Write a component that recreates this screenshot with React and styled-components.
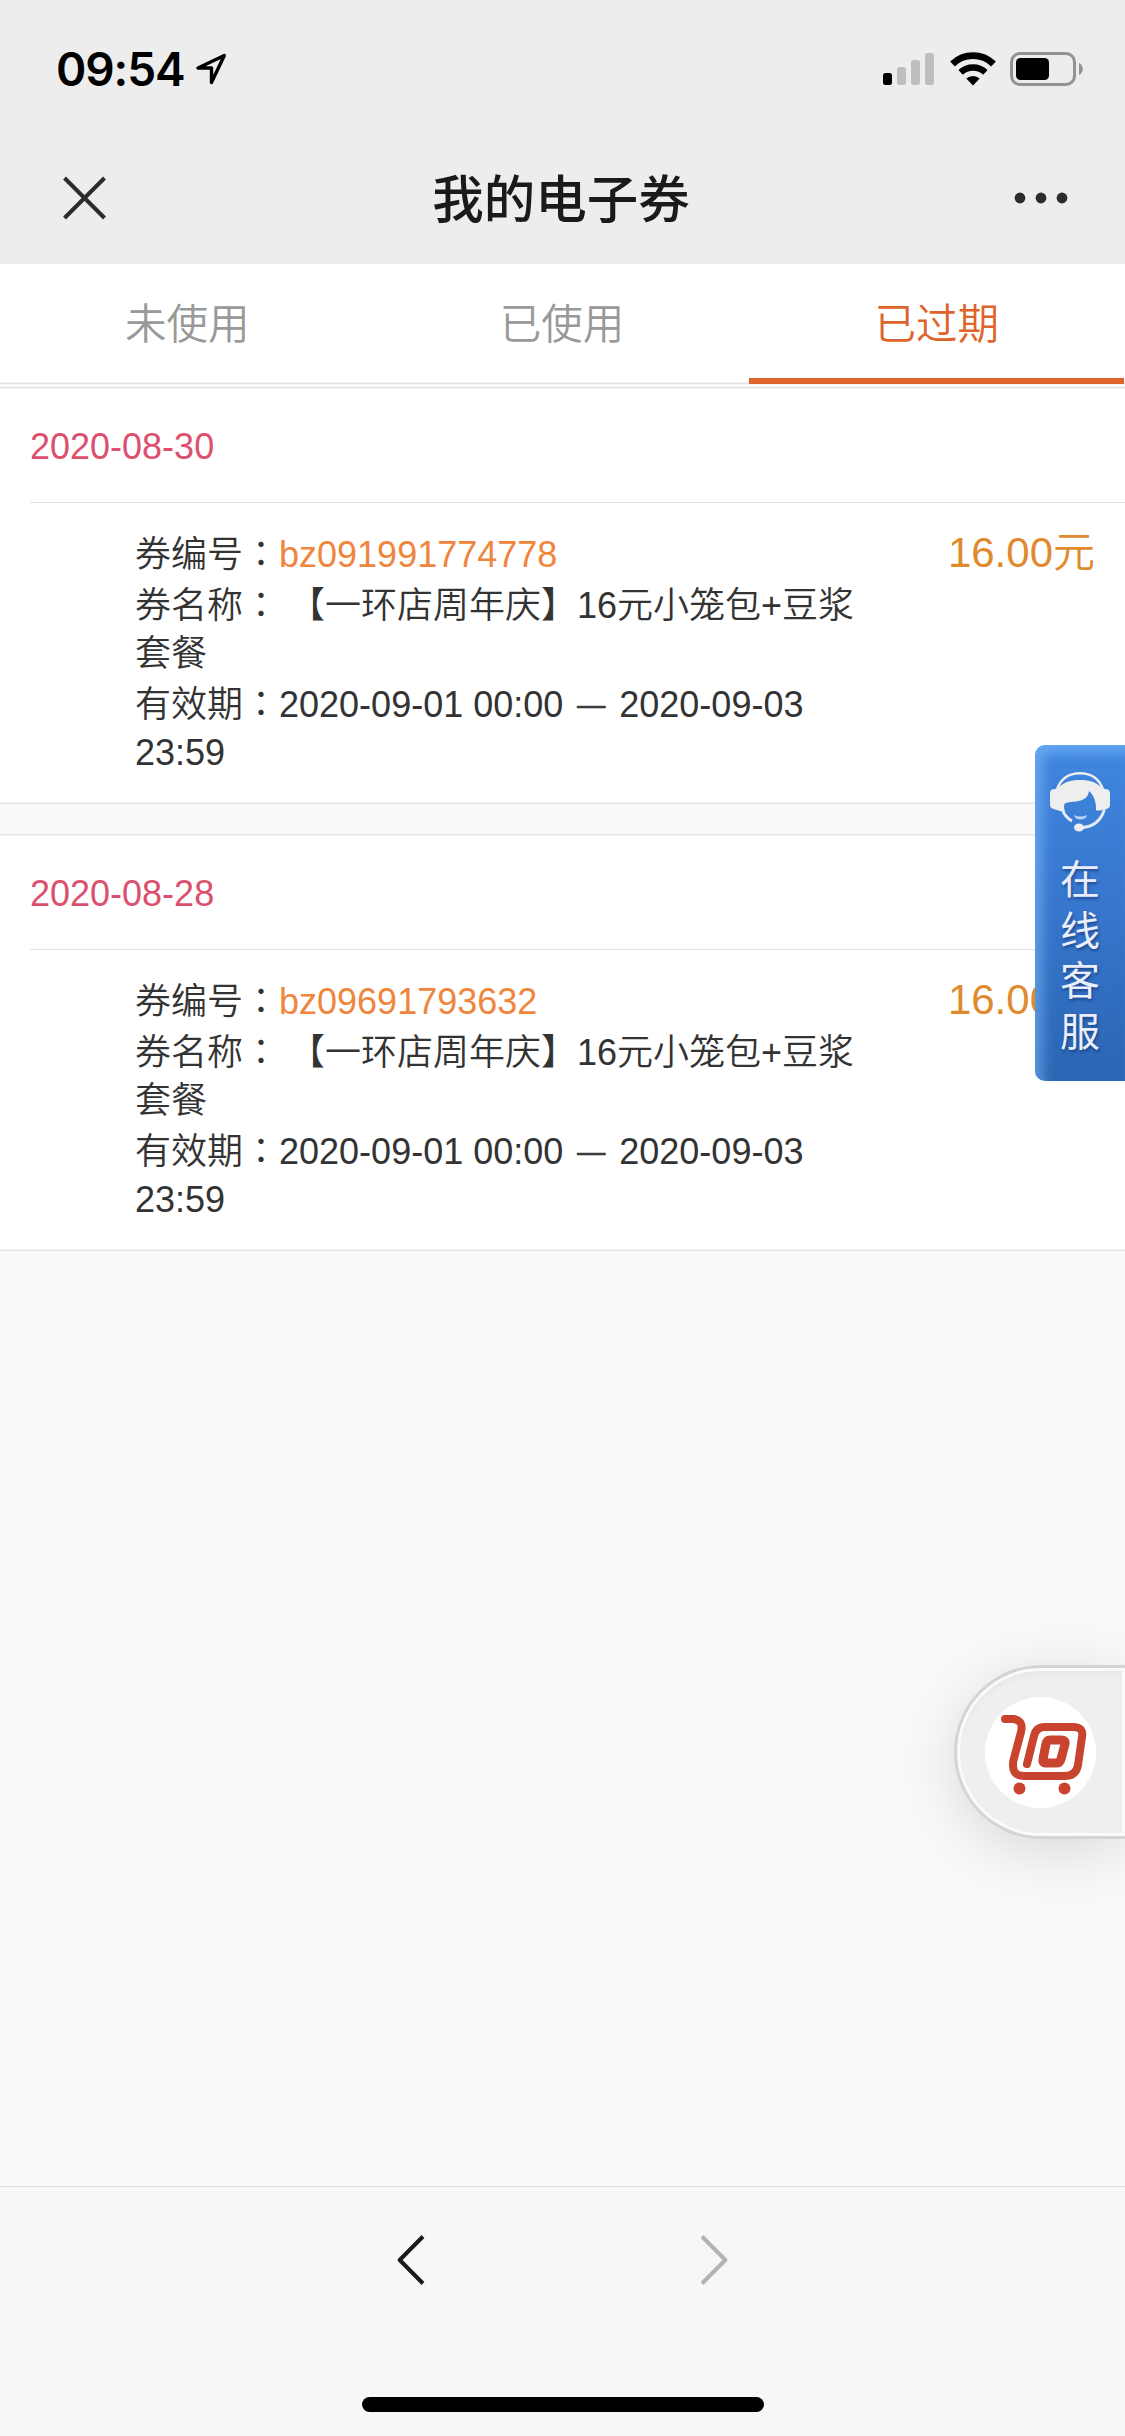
import React from "react";
import styled, { createGlobalStyle } from "styled-components";

const GlobalStyle = createGlobalStyle`
  * { box-sizing: border-box; }
  body {
    margin: 0;
    background: #f9f9f9;
    font-family: "Liberation Sans", "Noto Sans CJK SC", sans-serif;
    color: #333;
  }
  svg { display: block; }
`;

const Screen = styled.div`
  position: relative;
  display: flex;
  flex-direction: column;
  width: 1125px;
  height: 2436px;
  overflow: hidden;
  background: #f9f9f9;
`;

const Header = styled.header`
  height: 264px;
  flex: none;
  background: #ededed;
`;

const StatusBar = styled.div`
  display: flex;
  align-items: center;
  justify-content: space-between;
  height: 132px;
  padding: 6px 42px 0 56px;
`;

const Clock = styled.div`
  display: flex;
  align-items: center;
  gap: 10px;
  font: 600 46px/60px Inter, sans-serif;
  letter-spacing: -1.1px;
  color: #000;
`;

const StatusIcons = styled.div`
  display: flex;
  align-items: center;
  gap: 14.5px;
`;

const NavBar = styled.div`
  display: grid;
  grid-template-columns: 200px 1fr 200px;
  align-items: center;
  height: 132px;
`;

const NavSlot = styled.div`
  display: flex;
  justify-content: ${(p) => p.$side};
  padding: ${(p) => (p.$side === "flex-start" ? "0 0 0 61px" : "0 57px 0 0")};
`;

const Title = styled.h1`
  margin: 0;
  padding-right: 3px;
  text-align: center;
  font-family: "Noto Sans CJK SC", sans-serif;
  font-size: 51.5px;
  line-height: 128px;
  height: 132px;
  font-weight: 500;
  color: #1a1a1a;
`;

const Tabs = styled.nav`
  display: flex;
  flex: none;
  width: 100%;
  height: 120px;
  padding-right: 1px;
  background: #fff;
  box-shadow: inset 0 -1px #e3e3e3, inset 0 -2px #f0f0f0;
`;

const Tab = styled.div`
  flex: 1;
  height: 120px;
  text-align: center;
  font-size: 41.5px;
  font-weight: 350;
  line-height: 122px;
  color: ${(p) => (p.$active ? "#de642b" : "#999")};
  border-bottom: 6px solid ${(p) => (p.$active ? "#de642b" : "transparent")};
`;

const List = styled.main`
  display: flex;
  flex-direction: column;
  gap: 30px;
  flex: 1;
  padding-top: 3px;
`;

const Card = styled.section`
  height: 417px;
  background: #fff;
  border-top: 1px solid #e3e3e3;
  border-bottom: 1px solid #e3e3e3;
  box-shadow: inset 0 1px #f2f2f2, inset 0 -1px #f2f2f2;
`;

const CardDate = styled.div`
  height: 115px;
  margin-left: 30px;
  font-size: 36px;
  line-height: 118px;
  color: #dd4f6e;
  border-bottom: 1px solid #e3e3e3;
`;

const CardBody = styled.div`
  display: flex;
  justify-content: space-between;
  padding: 25px 30px 0 135px;
`;

const Details = styled.div`
  width: 735px;
  font-size: 36px;
  font-weight: 350;
`;

const Row = styled.div`
  padding-top: 3px;
  line-height: 48px;
`;

const Colon = styled.span`
  font-family: "Noto Sans CJK TC", sans-serif;
  line-height: 0;
`;

const Code = styled.span`
  color: #ef863e;
`;

const Dash = styled.span`
  padding: 0 4px;
  font-size: 28px;
  line-height: 0;
  vertical-align: 3px;
  -webkit-text-stroke: 0.7px #333;
`;

const Price = styled.div`
  font-size: 42px;
  font-weight: 350;
  line-height: 50px;
  white-space: nowrap;
  color: #e08a30;
`;

const ServiceTab = styled.aside`
  position: absolute;
  right: 0;
  top: 745px;
  display: flex;
  flex-direction: column;
  align-items: center;
  width: 90px;
  height: 336px;
  padding-top: 26px;
  border-radius: 10px 0 0 10px;
  background: linear-gradient(#3f87df, #3877ce 45%, #2a66b3);
  box-shadow: inset 8px 8px 12px rgba(135, 195, 255, 0.5);
`;

const ServiceText = styled.div`
  width: 40px;
  margin-top: 22px;
  font-size: 40px;
  line-height: 50.6px;
  color: #e9eefa;
  text-shadow: 1px 2px 3px rgba(10, 40, 100, 0.6);
`;

const CartDock = styled.aside`
  position: absolute;
  right: 0;
  top: 1665px;
  width: 171px;
  height: 174px;
  padding: 3px;
  border: 3px solid #d4d4d4;
  border-right: 0;
  border-radius: 87px 0 0 87px;
  background: #fafafa;
  box-shadow: 0 12px 60px rgba(0, 0, 0, 0.13);
`;

const CartInner = styled.div`
  display: flex;
  align-items: center;
  height: 162px;
  padding-left: 25px;
  border-radius: 81px 0 0 81px;
  background: #efefef;
  box-shadow: inset 0 6px 8px -4px rgba(0, 0, 0, 0.05);
`;

const CartCircle = styled.div`
  width: 111px;
  height: 111px;
  border-radius: 50%;
  background: #fff;
`;

const Toolbar = styled.footer`
  display: flex;
  flex: none;
  flex-direction: column;
  align-items: center;
  height: 250px;
  padding-top: 47px;
  background: #f7f7f7;
  border-top: 1px solid #dcdcdc;
`;

const PageButtons = styled.div`
  display: flex;
  gap: 275px;
`;

const HomeIndicator = styled.div`
  width: 402px;
  height: 15px;
  margin: 111px 0 0 1px;
  border-radius: 8px;
  background: #000;
`;

const LocationIcon = () => (
  <svg width="32" height="32" viewBox="0 0 32 32">
    <path d="M29.300 2.500 3 15H16.500V29.500Z" fill="none" stroke="#000" strokeWidth="3.4" strokeLinejoin="round" />
  </svg>
);

const SignalIcon = () => (
  <svg width="52" height="34" viewBox="0 0 52 34">
    <rect x="0" y="21" width="9" height="12" rx="2.5" fill="#000" />
    <rect x="14" y="15" width="9" height="18" rx="2.5" fill="#bebebe" />
    <rect x="28" y="8" width="9" height="25" rx="2.5" fill="#bebebe" />
    <rect x="42" y="1" width="9" height="32" rx="2.5" fill="#bebebe" />
  </svg>
);

const WifiIcon = () => (
  <svg width="46" height="34" viewBox="0 0 46 34">
    <path d="M2.5 12a29.500 29.500 0 0 1 41 0" fill="none" stroke="#000" strokeWidth="6.8" />
    <path d="M10.6 20.4a18 18 0 0 1 24.800 0" fill="none" stroke="#000" strokeWidth="6.4" />
    <path d="M16.300 26.600a9.600 9.600 0 0 1 13.400 0L23 33.400Z" fill="#000" />
  </svg>
);

const BatteryIcon = () => (
  <svg width="73" height="34" viewBox="0 0 73 34">
    <rect x="1.5" y="1.5" width="63" height="31" rx="8.5" fill="none" stroke="#929292" strokeWidth="3" />
    <rect x="6" y="6" width="33" height="22" rx="4.5" fill="#000" />
    <path d="M69 11c5 2 5 10 0 12Z" fill="#929292" />
  </svg>
);

const CloseIcon = () => (
  <svg width="46" height="46" viewBox="0 0 46 46">
    <path d="M3.5 3 43.5 43M43.5 3 3.5 43" stroke="#2c2c2c" strokeWidth="4" />
  </svg>
);

const MoreIcon = () => (
  <svg width="54" height="12" viewBox="0 0 54 12">
    {[6, 27, 48].map((x) => (
      <circle key={x} cx={x} cy="6" r="5.4" fill="#2c2c2c" />
    ))}
  </svg>
);

const Chevron = ({ forward }) => (
  <svg width="28" height="52" viewBox="0 0 28 52">
    <path
      d={forward ? "M2 2.5 25.3 26 2 49.5" : "M26 2.5 2.7 26 26 49.5"}
      fill="none"
      stroke={forward ? "#b2b2b2" : "#1a1a1a"}
      strokeWidth="4"
      strokeLinejoin="round"
    />
  </svg>
);

const HeadsetIcon = () => (
  <svg width="60" height="62" viewBox="0 0 60 62">
    <path d="M6.500 20C10 8 19 2.200 30 2.200S50 8 53.500 20" fill="none" stroke="#eee" strokeWidth="2.6" />
    <path d="M2 18.500 8 17.500C13 11 21 9 30 9S47 11 52 17.500L58 18.500Q60 19 60 22V34Q60 37 58 37.500L50 39.500H46C46.500 32 44 24 39 20 38 27 33 29.500 26 30.500 19 31.500 14 31 14 35Q14 38 15 40H10L2 37.500Q0 37 0 34V22Q0 19 2 18.500Z" fill="#eee" />
    <path d="M12.500 39c2 5.500 5 8.500 9.500 11" fill="none" stroke="#e4ecf7" strokeWidth="3" />
    <path d="M24 44q6 3 13 0-1 4.500-6.500 4.500T24 44Z" fill="#b9d2f3" />
    <path d="M54.500 38C51 50 43 56.500 30 56.500" fill="none" stroke="#e4ecf7" strokeWidth="2.8" />
    <ellipse cx="29" cy="56.500" rx="5" ry="4" fill="#eee" />
  </svg>
);

const CartIcon = () => (
  <svg width="111" height="111" viewBox="0 0 111 111" fill="none" stroke="#c9442f" strokeWidth="8" strokeLinecap="round" strokeLinejoin="round">
    <path d="M20 22h8q11 1 8 13L28.500 63q-3 16 10.500 16H80q11 0 13-11l4-28q2-10-9-10H60q-9 0-11 9l-7 28" />
    <path strokeWidth="9" d="M65 43h11q5 0 4 4l-4 15q-1 4-5 4H61q-4 0-3-4l3-15q1-4 4-4Z" />
    <circle cx="34.500" cy="91.500" r="6" fill="#c9442f" stroke="none" />
    <circle cx="79.500" cy="91.500" r="6" fill="#c9442f" stroke="none" />
  </svg>
);

const coupons = [
  { date: "2020-08-30", code: "bz091991774778" },
  { date: "2020-08-28", code: "bz09691793632" },
];

const Coupon = ({ date, code }) => (
  <Card>
    <CardDate>{date}</CardDate>
    <CardBody>
      <Details>
        <Row>券编号<Colon>：</Colon><Code>{code}</Code></Row>
        <Row>券名称<Colon>：</Colon> 【一环店周年庆】16元小笼包+豆浆套餐</Row>
        <Row>有效期<Colon>：</Colon>2020-09-01 00:00 <Dash>—</Dash> 2020-09-03 23:59</Row>
      </Details>
      <Price>16.00元</Price>
    </CardBody>
  </Card>
);

export default function App() {
  return (
    <Screen>
      <GlobalStyle />
      <Header>
        <StatusBar>
          <Clock>09:54<LocationIcon /></Clock>
          <StatusIcons>
            <SignalIcon />
            <WifiIcon />
            <BatteryIcon />
          </StatusIcons>
        </StatusBar>
        <NavBar>
          <NavSlot $side="flex-start"><CloseIcon /></NavSlot>
          <Title>我的电子券</Title>
          <NavSlot $side="flex-end"><MoreIcon /></NavSlot>
        </NavBar>
      </Header>
      <Tabs>
        <Tab>未使用</Tab>
        <Tab>已使用</Tab>
        <Tab $active>已过期</Tab>
      </Tabs>
      <List>
        {coupons.map((c) => <Coupon key={c.code} {...c} />)}
      </List>
      <Toolbar>
        <PageButtons>
          <Chevron />
          <Chevron forward />
        </PageButtons>
        <HomeIndicator />
      </Toolbar>
      <ServiceTab>
        <HeadsetIcon />
        <ServiceText>在线客服</ServiceText>
      </ServiceTab>
      <CartDock>
        <CartInner>
          <CartCircle><CartIcon /></CartCircle>
        </CartInner>
      </CartDock>
    </Screen>
  );
}
